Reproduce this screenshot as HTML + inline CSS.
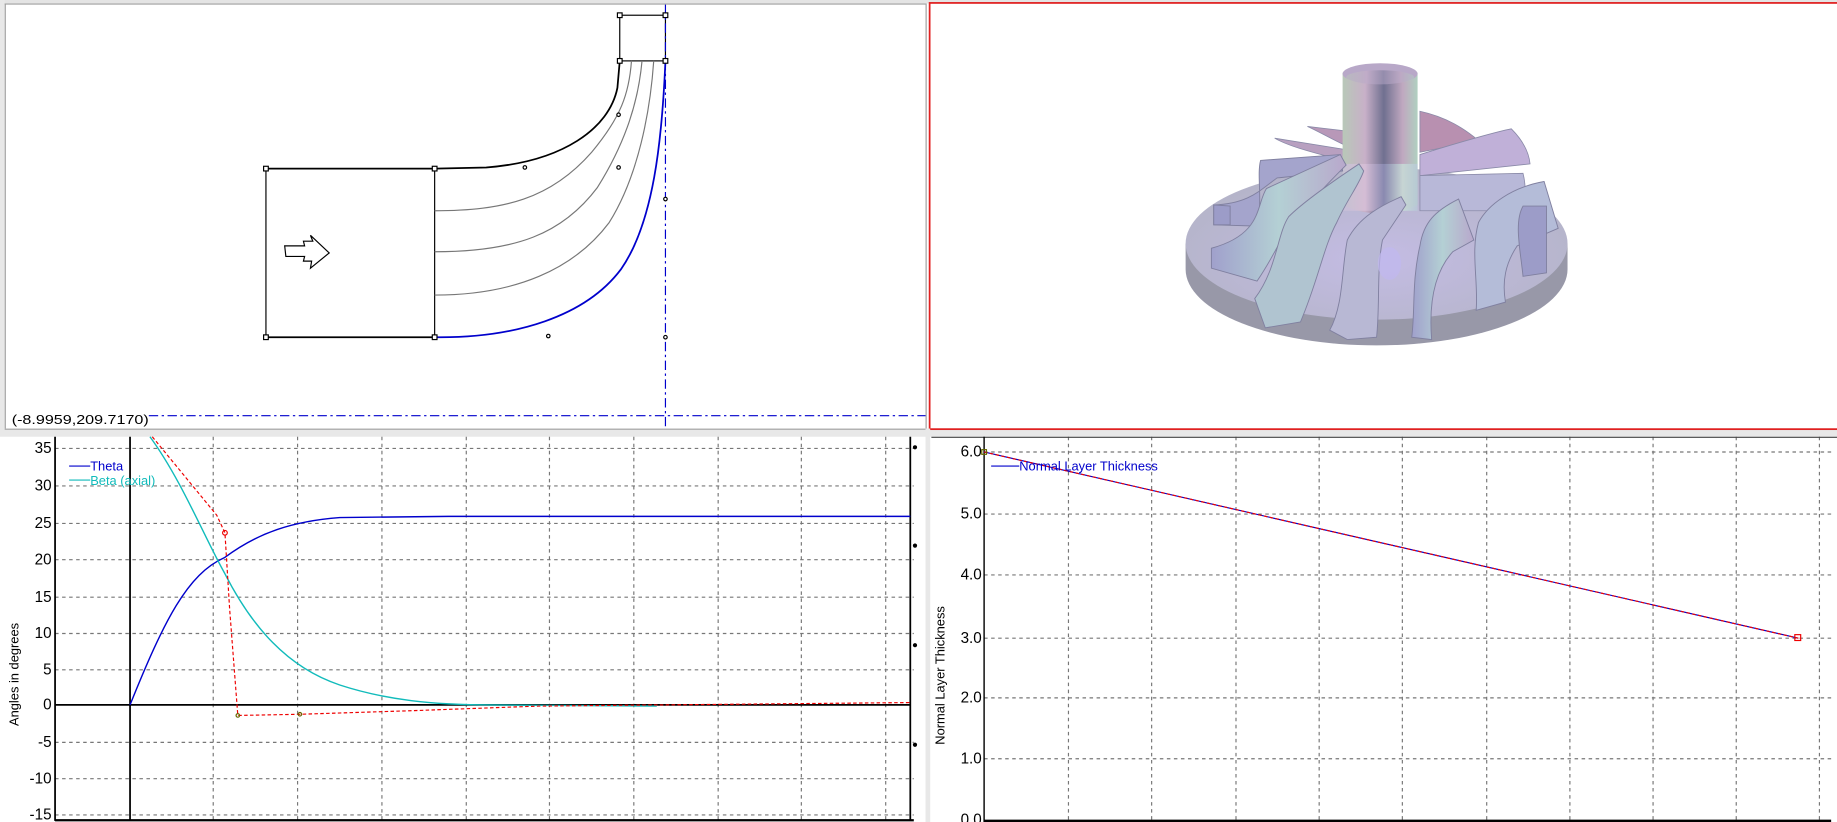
<!DOCTYPE html>
<html><head><meta charset="utf-8"><style>
html,body{margin:0;padding:0;background:#fff;overflow:hidden}
svg{display:block}
text{font-family:"Liberation Sans",sans-serif}
</style></head><body>
<svg width="1837" height="822" viewBox="0 0 1568 702" preserveAspectRatio="none" xmlns="http://www.w3.org/2000/svg">
<defs>
<linearGradient id="hub" x1="0" x2="1" y1="0" y2="0">
<stop offset="0" stop-color="#b8c8b8"/><stop offset="0.3" stop-color="#c8b0c8"/><stop offset="0.55" stop-color="#707090"/><stop offset="0.8" stop-color="#c0a8c0"/><stop offset="1" stop-color="#b0d0c0"/></linearGradient>
<linearGradient id="hub2" x1="0" x2="1" y1="0" y2="0">
<stop offset="0" stop-color="#c8c0d8"/><stop offset="0.3" stop-color="#d8c0d8"/><stop offset="0.55" stop-color="#9090b8"/><stop offset="0.8" stop-color="#c8e0d8"/><stop offset="1" stop-color="#b8c8d8"/></linearGradient>
<radialGradient id="disk" cx="0.5" cy="0.6" r="0.6"><stop offset="0" stop-color="#c4bce4"/><stop offset="1" stop-color="#b4b4c8"/></radialGradient>
<linearGradient id="bl" x1="0" x2="1"><stop offset="0" stop-color="#a0a0cc"/><stop offset="0.5" stop-color="#b4d0d4"/><stop offset="1" stop-color="#b8a8cc"/></linearGradient>
<linearGradient id="bl2" x1="0" x2="0" y1="0" y2="1"><stop offset="0" stop-color="#b8a8c8"/><stop offset="1" stop-color="#a8a8d0"/></linearGradient>
</defs>
<rect width="1568" height="702" fill="#fff"/>
<!-- frames -->
<rect x="0" y="0" width="1568" height="3" fill="#e4e4e4"/>
<rect x="0" y="0" width="4" height="370" fill="#e8e8e8"/>
<line x1="4.5" y1="3" x2="4.5" y2="366" stroke="#a0a0a0"/>
<line x1="4" y1="3.5" x2="790" y2="3.5" stroke="#a0a0a0"/>
<line x1="790.5" y1="3" x2="790.5" y2="366" stroke="#a0a0a0"/>
<rect x="0" y="366" width="1568" height="7" fill="#e8e8e8"/>
<line x1="4" y1="366.5" x2="790" y2="366.5" stroke="#a0a0a0"/>
<rect x="793.5" y="2.5" width="1572" height="364" fill="none" stroke="#e02020" stroke-width="1.5"/>
<rect x="790" y="366" width="4" height="336" fill="#e8e8e8"/>

<!-- meridional view -->
<g fill="none" stroke-width="1">
<rect x="227" y="144" width="144" height="144" stroke="#000"/>
<line x1="227" y1="144" x2="371" y2="144" stroke="#000" stroke-width="1.5"/>
<line x1="227" y1="288" x2="371" y2="288" stroke="#000" stroke-width="1.5"/>
<rect x="529" y="13" width="39" height="39" stroke="#000"/>
<path d="M371 144 L415 143 C480 138 520 110 527 75 L529 52" stroke="#000" stroke-width="1.5"/>
<path d="M371 180 C430 180 470 170 505 130 C530 100 537 80 539 52" stroke="#777"/>
<path d="M371 215 C440 215 480 200 510 160 C535 120 545 85 548 52" stroke="#777"/>
<path d="M371 252 C440 252 490 230 520 190 C545 150 555 95 558 52" stroke="#777"/>
<path d="M371 288 C440 289 500 270 530 230 C558 190 565 120 568 52" stroke="#00c" stroke-width="1.5"/>
<line x1="568" y1="4" x2="568" y2="366" stroke="#00c" stroke-dasharray="8,3,2,3"/>
<line x1="127" y1="355" x2="790" y2="355" stroke="#00c" stroke-dasharray="8,3,2,3"/>
<path d="M243 210 L260 210 L259 206 L267 206 L265 201 L281 216 L265 229 L266 223 L259 223 L260 219 L244 219 Z" stroke="#000"/>
</g>
<g fill="#fff" stroke="#000" stroke-width="1">
<rect x="225" y="142" width="4" height="4"/><rect x="369" y="142" width="4" height="4"/><rect x="225" y="286" width="4" height="4"/><rect x="369" y="286" width="4" height="4"/>
<rect x="527" y="11" width="4" height="4"/><rect x="566" y="11" width="4" height="4"/><rect x="527" y="50" width="4" height="4"/><rect x="566" y="50" width="4" height="4"/>
<circle cx="448" cy="143" r="1.5"/><circle cx="528" cy="98" r="1.5"/><circle cx="528" cy="143" r="1.5"/><circle cx="568" cy="170" r="1.5"/><circle cx="468" cy="287" r="1.5"/><circle cx="568" cy="288" r="1.5"/>
</g>
<text x="10" y="362" font-size="11" fill="#000" textLength="117" lengthAdjust="spacingAndGlyphs">(-8.9959,209.7170)</text>

<!-- impeller -->
<path d="M1012 208 L1012 230 A163 65 0 0 0 1338 230 L1338 208 Z" fill="#9898a8"/>
<ellipse cx="1175" cy="208" rx="163" ry="65" fill="url(#disk)"/>
<!-- back blades -->
<g stroke="#8a8aa8" stroke-width="0.7">
<path d="M1116 108 L1150 112 L1150 125 C1135 118 1125 112 1116 108 Z" fill="#b898b8"/>
<path d="M1088 118 L1150 128 L1150 138 C1120 130 1100 125 1088 118 Z" fill="#b8a0c0"/>
<path d="M1212 95 C1235 100 1250 110 1262 120 L1212 130 Z" fill="#b890b0"/>
<path d="M1212 132 C1250 120 1280 112 1290 110 C1300 120 1305 130 1306 140 L1212 150 Z" fill="#c0b0d8"/>
<path d="M1212 150 L1300 148 C1303 160 1302 172 1300 180 L1212 180 Z" fill="#b8b8d8"/>
</g>
<path d="M1146 62 L1146 175 Q1178 190 1210 175 L1210 62 Z" fill="url(#hub)"/>
<rect x="1146" y="140" width="64" height="40" fill="url(#hub2)" opacity="0.8"/>
<ellipse cx="1178" cy="63" rx="32" ry="9" fill="#b8a8c8"/>
<ellipse cx="1178" cy="66" rx="29" ry="6" fill="url(#hub)" opacity="0.5"/>
<!-- front blades -->
<g stroke="#8080a0" stroke-width="0.8">
<path d="M1036 175 L1036 192 L1070 193 C1080 180 1072 152 1076 137 L1144 132 L1146 146 L1090 152 C1076 162 1066 174 1036 175 Z" fill="#a4a4cc"/>
<path d="M1034 212 L1034 229 L1073 240 C1090 215 1095 198 1104 190 C1120 170 1140 150 1149 141 L1144 132 L1081 161 C1072 175 1078 200 1034 212 Z" fill="url(#bl)"/>
<path d="M1071 255 L1080 280 L1110 275 C1125 240 1130 210 1141 190 C1150 170 1160 158 1164 146 L1160 140 C1130 160 1110 175 1100 185 C1090 200 1090 230 1071 255 Z" fill="#b0c4d0"/>
<path d="M1135 282 L1150 290 L1175 288 C1178 260 1175 230 1180 205 L1200 175 L1196 168 C1180 175 1160 185 1150 205 C1145 230 1147 260 1135 282 Z" fill="#b8b8d4"/>
<path d="M1205 288 L1222 290 C1220 265 1222 235 1240 215 L1258 205 L1245 170 C1225 180 1215 190 1212 210 C1205 240 1208 265 1205 288 Z" fill="url(#bl)"/>
<path d="M1260 265 L1285 258 C1282 240 1285 225 1295 210 L1330 195 L1318 155 C1290 160 1270 175 1262 190 C1255 215 1262 240 1260 265 Z" fill="#b4bcd8"/>
<path d="M1300 236 L1320 233 L1320 176 L1300 176 C1292 190 1298 215 1300 236 Z" fill="#9c9cc8"/>
<path d="M1036 175 L1036 192 L1050 192 L1050 176 Z" fill="#9c9cc8"/>
</g>
<ellipse cx="1186" cy="225" rx="10" ry="14" fill="#c0b8f0" opacity="0.7"/>

<!-- bottom-left chart -->
<g stroke="#777" stroke-dasharray="3,3" stroke-width="1">
<line x1="47" y1="383" x2="780" y2="383"/><line x1="47" y1="415" x2="780" y2="415"/><line x1="47" y1="447" x2="780" y2="447"/><line x1="47" y1="478" x2="780" y2="478"/><line x1="47" y1="510" x2="780" y2="510"/><line x1="47" y1="541" x2="780" y2="541"/><line x1="47" y1="572" x2="780" y2="572"/><line x1="47" y1="634" x2="780" y2="634"/><line x1="47" y1="665" x2="780" y2="665"/><line x1="47" y1="696" x2="780" y2="696"/>
<line x1="182" y1="373" x2="182" y2="700"/><line x1="254" y1="373" x2="254" y2="700"/><line x1="326" y1="373" x2="326" y2="700"/><line x1="398" y1="373" x2="398" y2="700"/><line x1="469" y1="373" x2="469" y2="700"/><line x1="541" y1="373" x2="541" y2="700"/><line x1="613" y1="373" x2="613" y2="700"/><line x1="684" y1="373" x2="684" y2="700"/><line x1="756" y1="373" x2="756" y2="700"/>
</g>
<line x1="47" y1="373" x2="47" y2="701" stroke="#000" stroke-width="1.5"/>
<line x1="777" y1="373" x2="777" y2="701" stroke="#000" stroke-width="1.5"/>
<line x1="47" y1="700.5" x2="780" y2="700.5" stroke="#000" stroke-width="2"/>
<line x1="111" y1="373" x2="111" y2="700" stroke="#000" stroke-width="1.5"/>
<line x1="47" y1="602" x2="777" y2="602" stroke="#000" stroke-width="1.5"/>
<g font-size="13" fill="#000" text-anchor="end">
<text x="44" y="387">35</text><text x="44" y="419">30</text><text x="44" y="451">25</text><text x="44" y="482">20</text><text x="44" y="514">15</text><text x="44" y="545">10</text><text x="44" y="576">5</text><text x="44" y="606">0</text><text x="44" y="638">-5</text><text x="44" y="669">-10</text><text x="44" y="700">-15</text>
</g>
<text transform="translate(16,620) rotate(-90)" font-size="11" fill="#000">Angles in degrees</text>
<path d="M111 602 C140 530 160 490 192 476 C220 455 250 445 290 442 L383 441 L777 441" fill="none" stroke="#00c" stroke-width="1.2"/>
<path d="M128 373 C155 410 175 460 192 490 C215 535 245 570 290 585 C330 598 370 602 420 602 L560 603 L560 602" fill="none" stroke="#1bb" stroke-width="1.2"/>
<path d="M130 373 L185 440 L192 455 L196 520 L203 611 L256 610 L350 607 L460 603 L777 600" fill="none" stroke="#e00" stroke-dasharray="3,2" stroke-width="1"/>
<circle cx="192" cy="455" r="2" fill="none" stroke="#e00"/>
<circle cx="203" cy="611" r="1.5" fill="none" stroke="#660"/><circle cx="256" cy="610" r="1.5" fill="none" stroke="#660"/>
<line x1="59" y1="398" x2="77" y2="398" stroke="#00c"/><text x="77" y="402" font-size="11" fill="#00c">Theta</text>
<line x1="59" y1="410" x2="77" y2="410" stroke="#1bb"/><text x="77" y="414" font-size="11" fill="#1bb">Beta (axial)</text>
<g fill="#000"><circle cx="781" cy="382" r="1.8"/><circle cx="781" cy="466" r="1.8"/><circle cx="781" cy="551" r="1.8"/><circle cx="781" cy="636" r="1.8"/></g>

<!-- bottom-right chart -->
<g stroke="#777" stroke-dasharray="3,3" stroke-width="1">
<line x1="840" y1="386" x2="1563" y2="386"/><line x1="840" y1="439" x2="1563" y2="439"/><line x1="840" y1="491" x2="1563" y2="491"/><line x1="840" y1="545" x2="1563" y2="545"/><line x1="840" y1="596" x2="1563" y2="596"/><line x1="840" y1="648" x2="1563" y2="648"/>
<line x1="912" y1="373" x2="912" y2="700"/><line x1="983" y1="373" x2="983" y2="700"/><line x1="1055" y1="373" x2="1055" y2="700"/><line x1="1126" y1="373" x2="1126" y2="700"/><line x1="1197" y1="373" x2="1197" y2="700"/><line x1="1269" y1="373" x2="1269" y2="700"/><line x1="1340" y1="373" x2="1340" y2="700"/><line x1="1411" y1="373" x2="1411" y2="700"/><line x1="1482" y1="373" x2="1482" y2="700"/><line x1="1553" y1="373" x2="1553" y2="700"/>
</g>
<line x1="795" y1="373.5" x2="1568" y2="373.5" stroke="#444"/>
<line x1="840" y1="373" x2="840" y2="702" stroke="#000" stroke-width="1.2"/>
<line x1="840" y1="701" x2="1563" y2="701" stroke="#000" stroke-width="2"/>
<g font-size="13" fill="#000" text-anchor="end">
<text x="838" y="390">6.0</text><text x="838" y="443">5.0</text><text x="838" y="495">4.0</text><text x="838" y="549">3.0</text><text x="838" y="600">2.0</text><text x="838" y="652">1.0</text><text x="838" y="704">0.0</text>
</g>
<text transform="translate(806,636) rotate(-90)" font-size="11" fill="#000">Normal Layer Thickness</text>
<line x1="840" y1="386" x2="1535" y2="545" stroke="#00c" stroke-width="1"/>
<line x1="840" y1="386" x2="1535" y2="545" stroke="#e00" stroke-dasharray="3,2" stroke-width="1"/>
<rect x="838" y="384" width="4" height="4" fill="none" stroke="#660"/>
<rect x="1532" y="542" width="5" height="5" fill="none" stroke="#e00"/>
<line x1="846" y1="398" x2="870" y2="398" stroke="#00c"/>
<text x="870" y="402" font-size="11" fill="#00c">Normal Layer Thickness</text>
</svg>
</body></html>
